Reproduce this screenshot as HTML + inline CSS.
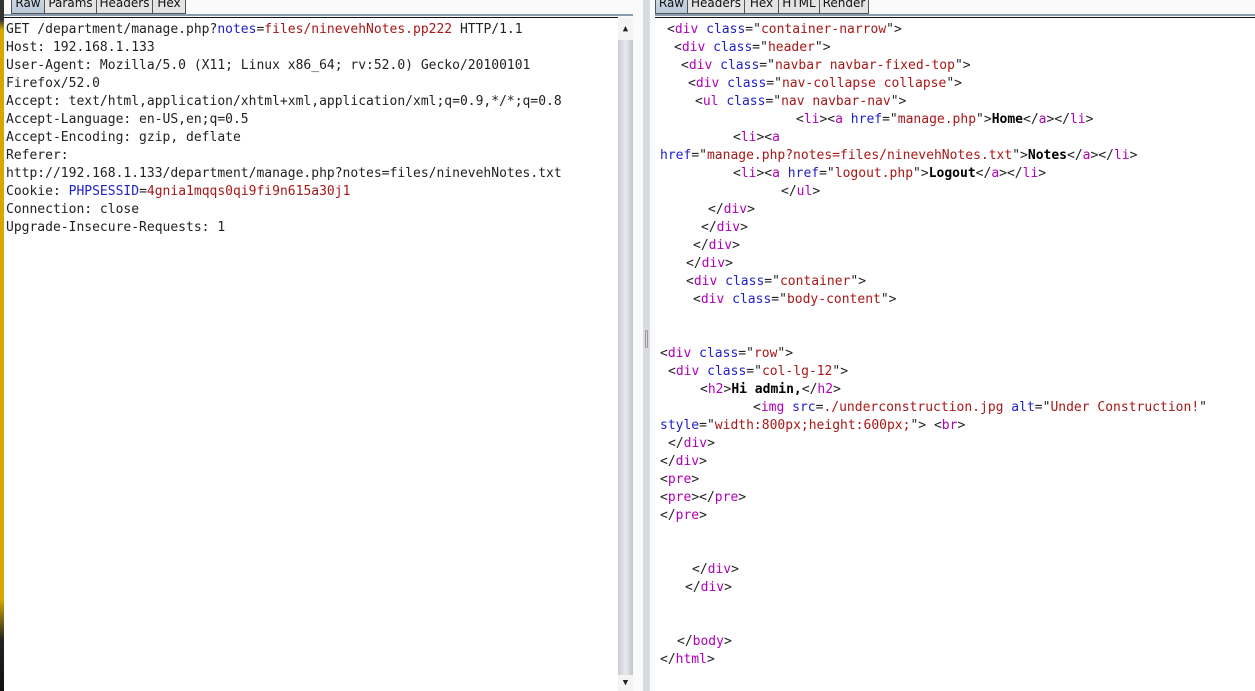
<!DOCTYPE html>
<html><head><meta charset="utf-8"><style>
*{margin:0;padding:0;box-sizing:border-box}
body{width:1255px;height:691px;background:#fafafa;position:relative;overflow:hidden;font-family:"DejaVu Sans Mono","Liberation Mono",monospace;font-size:13px;color:#222}
.abs{position:absolute}
.tab{position:absolute;top:-4px;height:18px;border:1px solid #555;border-top:none;background:#e4e4e4;font-family:"DejaVu Sans","Liberation Sans",sans-serif;font-size:12px;line-height:14px;text-align:center;color:#111}
.tab.sel{background:linear-gradient(#d0dce8,#b8c8d8);}
.ln{position:absolute;white-space:pre;line-height:18px;height:18px;margin-top:2px}
.t{color:#b000b8}.a{color:#2020c8}.v{color:#a81818}.b{font-weight:bold;color:#000}
</style></head><body>
<div class="abs" style="left:0;top:0;width:4px;height:691px;background:linear-gradient(#333 0,#333 20px,#d4a800 30px,#d4a800 600px,#222 640px,#111 691px)"></div>
<div class="tab sel" style="left:11px;width:34px">Raw</div>
<div class="tab" style="left:44px;width:53px">Params</div>
<div class="tab" style="left:96px;width:57px">Headers</div>
<div class="tab" style="left:152px;width:34px">Hex</div>
<div class="abs" style="left:4px;top:14px;width:629px;height:2px;background:#8a9cb0"></div>
<div class="abs" style="left:4px;top:17px;width:614px;height:1px;background:#111"></div>
<div class="abs" style="left:4px;top:18px;width:614px;height:673px;background:#fff"></div>
<div class="abs" style="left:618px;top:18px;width:15px;height:673px;background:linear-gradient(90deg,#c8ccd2,#e8eaee 50%,#c0c4ca)"></div>
<div class="abs" style="left:618px;top:18px;width:15px;height:22px;background:#f4f4f4;text-align:center;font-size:9px;line-height:22px">▲</div>
<div class="abs" style="left:618px;top:675px;width:15px;height:16px;background:#f4f4f4;text-align:center;font-size:9px;line-height:16px">▼</div>
<div class="abs" style="left:643px;top:0;width:7px;height:691px;background:#d8dbe0"></div>
<div class="abs" style="left:645px;top:330px;width:3px;height:18px;border:1px solid #999;border-radius:2px"></div>
<div class="ln" style="left:6px;top:19px">GET /department/manage.php?<span class="a">notes</span>=<span class="v">files/ninevehNotes.pp222</span> HTTP/1.1</div>
<div class="ln" style="left:6px;top:37px">Host: 192.168.1.133</div>
<div class="ln" style="left:6px;top:55px">User-Agent: Mozilla/5.0 (X11; Linux x86_64; rv:52.0) Gecko/20100101</div>
<div class="ln" style="left:6px;top:73px">Firefox/52.0</div>
<div class="ln" style="left:6px;top:91px">Accept: text/html,application/xhtml+xml,application/xml;q=0.9,*/*;q=0.8</div>
<div class="ln" style="left:6px;top:109px">Accept-Language: en-US,en;q=0.5</div>
<div class="ln" style="left:6px;top:127px">Accept-Encoding: gzip, deflate</div>
<div class="ln" style="left:6px;top:145px">Referer:</div>
<div class="ln" style="left:6px;top:163px">http://192.168.1.133/department/manage.php?notes=files/ninevehNotes.txt</div>
<div class="ln" style="left:6px;top:181px">Cookie: <span class="a">PHPSESSID</span>=<span class="v">4gnia1mqqs0qi9fi9n615a30j1</span></div>
<div class="ln" style="left:6px;top:199px">Connection: close</div>
<div class="ln" style="left:6px;top:217px">Upgrade-Insecure-Requests: 1</div>
<div class="tab sel" style="left:655px;width:33px">Raw</div>
<div class="tab" style="left:687px;width:58px">Headers</div>
<div class="tab" style="left:744px;width:35px">Hex</div>
<div class="tab" style="left:778px;width:42px">HTML</div>
<div class="tab" style="left:819px;width:50px">Render</div>
<div class="abs" style="left:655px;top:14px;width:600px;height:2px;background:#8a9cb0"></div>
<div class="abs" style="left:655px;top:17px;width:600px;height:1px;background:#111"></div>
<div class="abs" style="left:655px;top:18px;width:600px;height:673px;background:#fff"></div>
<div class="ln" style="left:667px;top:19px">&lt;<span class="t">div</span> <span class="a">class</span>="<span class="v">container-narrow</span>"&gt;</div>
<div class="ln" style="left:674px;top:37px">&lt;<span class="t">div</span> <span class="a">class</span>="<span class="v">header</span>"&gt;</div>
<div class="ln" style="left:681px;top:55px">&lt;<span class="t">div</span> <span class="a">class</span>="<span class="v">navbar navbar-fixed-top</span>"&gt;</div>
<div class="ln" style="left:688px;top:73px">&lt;<span class="t">div</span> <span class="a">class</span>="<span class="v">nav-collapse collapse</span>"&gt;</div>
<div class="ln" style="left:695px;top:91px">&lt;<span class="t">ul</span> <span class="a">class</span>="<span class="v">nav navbar-nav</span>"&gt;</div>
<div class="ln" style="left:796px;top:109px">&lt;<span class="t">li</span>&gt;&lt;<span class="t">a</span> <span class="a">href</span>="<span class="v">manage.php</span>"&gt;<span class="b">Home</span>&lt;/<span class="t">a</span>&gt;&lt;/<span class="t">li</span>&gt;</div>
<div class="ln" style="left:733px;top:127px">&lt;<span class="t">li</span>&gt;&lt;<span class="t">a</span></div>
<div class="ln" style="left:660px;top:145px"><span class="a">href</span>="<span class="v">manage.php?notes=files/ninevehNotes.txt</span>"&gt;<span class="b">Notes</span>&lt;/<span class="t">a</span>&gt;&lt;/<span class="t">li</span>&gt;</div>
<div class="ln" style="left:733px;top:163px">&lt;<span class="t">li</span>&gt;&lt;<span class="t">a</span> <span class="a">href</span>="<span class="v">logout.php</span>"&gt;<span class="b">Logout</span>&lt;/<span class="t">a</span>&gt;&lt;/<span class="t">li</span>&gt;</div>
<div class="ln" style="left:781px;top:181px">&lt;/<span class="t">ul</span>&gt;</div>
<div class="ln" style="left:708px;top:199px">&lt;/<span class="t">div</span>&gt;</div>
<div class="ln" style="left:701px;top:217px">&lt;/<span class="t">div</span>&gt;</div>
<div class="ln" style="left:693px;top:235px">&lt;/<span class="t">div</span>&gt;</div>
<div class="ln" style="left:686px;top:253px">&lt;/<span class="t">div</span>&gt;</div>
<div class="ln" style="left:686px;top:271px">&lt;<span class="t">div</span> <span class="a">class</span>="<span class="v">container</span>"&gt;</div>
<div class="ln" style="left:693px;top:289px">&lt;<span class="t">div</span> <span class="a">class</span>="<span class="v">body-content</span>"&gt;</div>
<div class="ln" style="left:660px;top:343px">&lt;<span class="t">div</span> <span class="a">class</span>="<span class="v">row</span>"&gt;</div>
<div class="ln" style="left:668px;top:361px">&lt;<span class="t">div</span> <span class="a">class</span>="<span class="v">col-lg-12</span>"&gt;</div>
<div class="ln" style="left:700px;top:379px">&lt;<span class="t">h2</span>&gt;<span class="b">Hi admin,</span>&lt;/<span class="t">h2</span>&gt;</div>
<div class="ln" style="left:753px;top:397px">&lt;<span class="t">img</span> <span class="a">src</span>=<span class="v">./underconstruction.jpg</span> <span class="a">alt</span>="<span class="v">Under Construction!</span>"</div>
<div class="ln" style="left:660px;top:415px"><span class="a">style</span>="<span class="v">width:800px;height:600px;</span>"&gt; &lt;<span class="t">br</span>&gt;</div>
<div class="ln" style="left:668px;top:433px">&lt;/<span class="t">div</span>&gt;</div>
<div class="ln" style="left:660px;top:451px">&lt;/<span class="t">div</span>&gt;</div>
<div class="ln" style="left:660px;top:469px">&lt;<span class="t">pre</span>&gt;</div>
<div class="ln" style="left:660px;top:487px">&lt;<span class="t">pre</span>&gt;&lt;/<span class="t">pre</span>&gt;</div>
<div class="ln" style="left:660px;top:505px">&lt;/<span class="t">pre</span>&gt;</div>
<div class="ln" style="left:692px;top:559px">&lt;/<span class="t">div</span>&gt;</div>
<div class="ln" style="left:685px;top:577px">&lt;/<span class="t">div</span>&gt;</div>
<div class="ln" style="left:677px;top:631px">&lt;/<span class="t">body</span>&gt;</div>
<div class="ln" style="left:660px;top:649px">&lt;/<span class="t">html</span>&gt;</div>
</body></html>
